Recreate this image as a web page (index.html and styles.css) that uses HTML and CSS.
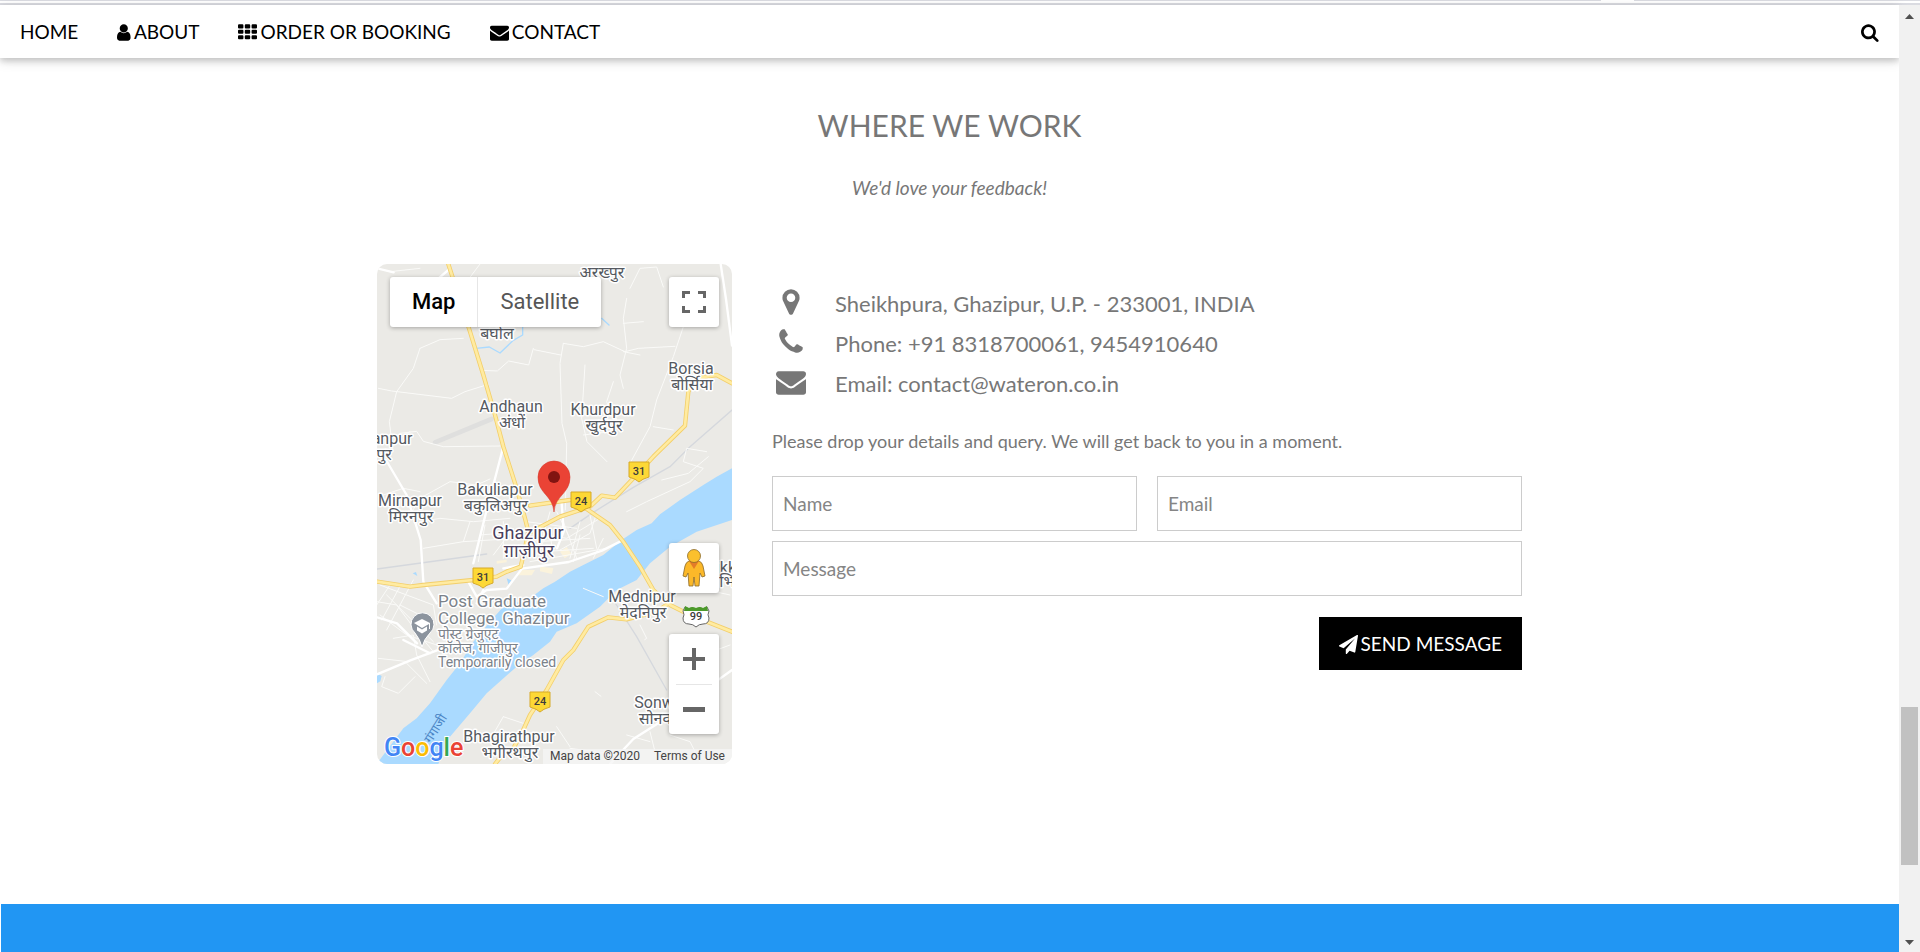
FILE: index.html
```html
<!DOCTYPE html>
<html lang="en">
<head>
<meta charset="utf-8">
<meta name="viewport" content="width=device-width, initial-scale=1">
<title>Where we work</title>
<link rel="stylesheet" href="styles.css">
</head>
<body>
<div class="strip"><span class="strip-left"></span><span class="strip-right"></span></div>
<div class="frame">
  <div class="page">
    <nav class="nav">
      <a class="nav-link" href="#home">HOME</a>
      <a class="nav-link" href="#about"><svg class="icon" viewBox="256 0 1280 1792" aria-hidden="true"><path d="M1536 1399q0 109-62.5 187t-150.5 78h-854q-88 0-150.5-78t-62.5-187q0-85 8.5-160.5t31.5-152 58.5-131 94-89 134.5-34.5q131 128 313 128t313-128q76 0 134.5 34.5t94 89 58.5 131 31.5 152 8.5 160.5zm-256-887q0 159-112.5 271.5t-271.5 112.5-271.5-112.5-112.5-271.5 112.5-271.5 271.5-112.5 271.5 112.5 112.5 271.5z"/></svg>ABOUT</a>
      <a class="nav-link" href="#order"><svg class="icon" viewBox="0 0 1792 1792" aria-hidden="true"><path d="M96 128h320q96 0 96 96v192q0 96-96 96H96q-96 0-96-96V224q0-96 96-96zM736 128h320q96 0 96 96v192q0 96-96 96H736q-96 0-96-96V224q0-96 96-96zM1376 128h320q96 0 96 96v192q0 96-96 96h-320q-96 0-96-96V224q0-96 96-96zM96 640h320q96 0 96 96v192q0 96-96 96H96q-96 0-96-96V736q0-96 96-96zM736 640h320q96 0 96 96v192q0 96-96 96H736q-96 0-96-96V736q0-96 96-96zM1376 640h320q96 0 96 96v192q0 96-96 96h-320q-96 0-96-96V736q0-96 96-96zM96 1152h320q96 0 96 96v192q0 96-96 96H96q-96 0-96-96v-192q0-96 96-96zM736 1152h320q96 0 96 96v192q0 96-96 96H736q-96 0-96-96v-192q0-96 96-96zM1376 1152h320q96 0 96 96v192q0 96-96 96h-320q-96 0-96-96v-192q0-96 96-96z"/></svg>ORDER OR BOOKING</a>
      <a class="nav-link" href="#contact"><svg class="icon" viewBox="0 0 1792 1792" aria-hidden="true"><path d="M1792 710v794q0 66-47 113t-113 47h-1472q-66 0-113-47t-47-113v-794q44 49 101 87 362 246 497 345 57 42 92.5 65.5t94.5 48 110 24.5h2q51 0 110-24.5t94.5-48 92.5-65.5q170-123 498-345 57-39 100-87zm0-294q0 79-49 151t-122 123q-376 261-468 325-10 7-42.5 31t-54 38.5-52 32.5-57.5 27-50 9h-2q-23 0-50-9t-57.5-27-52-32.5-54-38.5-42.5-31q-91-64-262-182.5t-205-142.5q-62-42-117-115.5t-55-136.5q0-78 41.5-130t118.5-52h1472q65 0 112.5 47t47.5 113z"/></svg>CONTACT</a>
      <a class="nav-link nav-search" href="#search" aria-label="Search"><svg class="icon" viewBox="64 0 1728 1792" aria-hidden="true"><path d="M1216 832q0-185-131.5-316.5t-316.5-131.5-316.5 131.5-131.5 316.5 131.5 316.5 316.5 131.5 316.5-131.5 131.5-316.5zm512 832q0 52-38 90t-90 38q-54 0-90-38l-343-342q-179 124-399 124-143 0-273.5-55.5t-225-150-150-225-55.5-273.5 55.5-273.5 150-225 225-150 273.5-55.5 273.5 55.5 225 150 150 225 55.5 273.5q0 220-124 399l343 343q37 37 37 90z"/></svg></a>
    </nav>

    <main class="section">
      <h3 class="title">WHERE WE WORK</h3>
      <p class="subtitle">We'd love your feedback!</p>
      <div class="columns">
        <div class="map">
          <svg class="map-canvas" viewBox="0 0 355 500" preserveAspectRatio="xMidYMid slice" role="img" aria-label="Map of Ghazipur">
            <rect width="355" height="500" fill="#ebeae6"/>
            <g transform="scale(.33333) translate(-21 -27)" fill="none" stroke-linejoin="round" stroke-linecap="round">
              <path fill="#aadaff" d="M1086 640L1040 665 1000 690 930 735 870 778 845 805 800 825 755 855 700 900 640 930 600 950 555 980 520 1000 480 1030 400 1055 360 1100 310 1160 270 1225 230 1275 180 1345 140 1390 100 1420 20 1527H205L240 1445 300 1375 350 1315 440 1235 490 1200 540 1160 560 1130 620 1105 690 1055 740 1005 800 975 840 925 900 875 980 830 1086 795Z"/>
              <path fill="#aadaff" d="M21 1255l14 8-4 16-10 6zM410 970l14 6-8 14zM128 955l10-4 4 12z"/>
              <g fill="#fbf3dc"><path d="M455 945h40l-10 16h-40zM510 935l40 4-4 18-36-8zM570 890l20-14 14 20-20 14zM380 918l30-4v8l-30 4z"/></g>
              <path stroke="#dfdfde" stroke-width="14" d="M195 562L365 492"/>
              <path stroke="#d5d8dd" stroke-width="4" d="M1086 465L960 575 900 635 790 697 670 772 600 820M21 942L350 897M730 1035L800 1145 890 1305"/>
              <path stroke="#aadaff" stroke-width="4" d="M318 280l40-4 32 18 40-38 28-16v-26M695 190l22 20"/>
              <g stroke="#fafaf8" stroke-width="3">
                <path d="M60 50l90-10M330 27l-30 40M580 265l-10 60 6 180 14 60-4 200M490 280l-14 50-60-12-34 30-50-2M492 284l80 16M580 265l60 10 60-15 65 30 40-10 110-6M150 280l-20 60-50 70-22 90 10 80-20 40M150 280l60-26 70-4M25 400l40 8 180 22 40-20 70-22M770 130l-10 60 10 90-20 80 10 40M940 215l-30 90-50 130-20 80-60 110M760 290l50 10M645 330l-10 160 16 70 60 60M730 380l-20 60 30 80M640 540l80-10 20-40M850 515l60 10M1010 590l-60-10-10 40 60 20-40 40-130 60-60 30M1015 605l-60 50-80 20M90 535l50-6 20 30 60 16 170-2M120 780l30-50 90-50 80 10 40-18M70 560l50-30M780 100l30-60 50-4 20 60M820 200l-60 5M150 800l60-10 100 10 110-10M40 720l60-20 50 10M20 1040l60 10 60 80 50 60M30 990l160 60 10 60M60 990l-40 60M95 985l-60 110M130 975l-80 150M30 1080l80 60 90 30M90 1050l100 50M50 1020l140 140M70 1150l60-10 10 60 40 80M45 1265l-10 30 50 20 50-50M25 1210l90 10M110 1225l60 60M300 800l-20 60-120 20M330 840l120-10M280 860l160-10M345 810l-20 110M400 800v110M430 820l-60 80M680 775l-20 60-90 50M500 900l30-60 60 10 100-60M540 830l10 80M580 800l40 110M630 800l-30 110M660 780l20 100M500 860l160-10M520 890l150-10M480 920l230-40M540 770l-20 70M560 770l40 80M470 800l150 20M610 920l20-80M700 850l-30 60M810 1110l20 40-6 4M675 1310l18 14M400 1385l60 20 20-12M400 1385l-40 70M560 1415l40 60M900 1440l60 20 30 60M840 1430l20 80M1000 1200l80-30M990 1000l90 20M640 1000l60 25M770 1440l70 20M600 1480l150 20"/>
              </g>
              <g stroke="#fff" stroke-width="7">
                <path d="M21 40l50 12M235 45l-30 26M1052 27l16 105 18 140M400 575L370 690 345 785 310 925M48 615l62 105 42 135 8 125 40 65M21 1258l100-42 80-30M295 980l25 45 30-20 60-4 46-60 140-20 100-34 60-30M100 1155l80 40M21 1087l60 18 60 60M720 1527l70-75 110-70M1030 1285l56-40M575 745l6 85-20 50M340 1005l-20 40M460 930l-60 10"/>
              </g>
              <g id="roads">
                <path class="road-edge" d="M235 27L300 230 340 360 375 480 400 575 440 700 465 790 475 830 465 880 452 935 410 950 380 965 310 975 160 990 120 995 21 980M480 752L600 735M485 830L570 785 660 755 695 722 735 728 790 670 850 605 945 512 955 410 975 370 1040 360 1086 385M640 755L720 810 760 860 810 935 850 1005 900 1050 960 1080 1086 1130M900 1042L860 1070 770 1093 715 1087 655 1115 610 1185 580 1215 530 1305 480 1380 455 1435 430 1480 400 1495 375 1527"/>
                <path class="road-fill" d="M235 27L300 230 340 360 375 480 400 575 440 700 465 790 475 830 465 880 452 935 410 950 380 965 310 975 160 990 120 995 21 980M480 752L600 735M485 830L570 785 660 755 695 722 735 728 790 670 850 605 945 512 955 410 975 370 1040 360 1086 385M640 755L720 810 760 860 810 935 850 1005 900 1050 960 1080 1086 1130M900 1042L860 1070 770 1093 715 1087 655 1115 610 1185 580 1215 530 1305 480 1380 455 1435 430 1480 400 1495 375 1527"/>
              </g>
            </g>
            <g class="shield">
              <path d="M252 198h20v15q-7 2-10 5q-3-3-10-5z"/><path d="M194 228h20v15q-7 2-10 5q-3-3-10-5z"/><path d="M96 304h20v15q-7 2-10 5q-3-3-10-5z"/><path d="M153 428h20v15q-7 2-10 5q-3-3-10-5z"/>
            </g>
            <path d="M308 343l4 2q3-2 7 0q4-2 7 0l4-2 2 4q-2 4 0 7q0 6-6 6-4 0-7 3-3-3-7-3-6 0-6-6 2-3 0-7z" fill="#fff" stroke="#666" stroke-width="1"/>
            <path d="M308 342l4 2q3-2 7 0q4-2 7 0l4-2 1 5h-24z" fill="#4c9a2a"/>
            <g class="shield-text">
              <text x="262" y="211">31</text><text x="204" y="241">24</text><text x="106" y="317">31</text><text x="163" y="441">24</text><text x="319" y="356">99</text>
            </g>
            <g class="label">
              <text x="225" y="14">अरख्पुर</text><text x="120" y="75">बघोल</text>
              <text x="314" y="110">Borsia</text><text x="315" y="126">बोर्सिया</text>
              <text x="134" y="148">Andhaun</text><text x="135" y="164">अंधों</text>
              <text x="226" y="151">Khurdpur</text><text x="227" y="167">खुर्दपुर</text>
              <text x="15" y="180">anpur</text><text x="7" y="196">पुर</text>
              <text x="118" y="231">Bakuliapur</text><text x="119" y="247">बकुलिअपुर</text>
              <text x="33" y="242">Mirnapur</text><text x="34" y="258">मिरनपुर</text>
              <text x="265" y="338">Mednipur</text><text x="266" y="354">मेदनिपुर</text>
              <text x="349" y="309">ikk</text><text x="350" y="323">भि</text>
              <text x="277" y="444">Sonw</text><text x="278" y="460">सोनव</text>
              <text x="132" y="478">Bhagirathpur</text><text x="133" y="494">भगीरथपुर</text>
            </g>
            <g class="label label-city"><text x="151" y="275">Ghazipur</text><text x="152" y="293">ग़ाज़ीपुर</text></g>
            <g class="label label-poi">
              <text x="61" y="343">Post Graduate</text><text x="61" y="360">College, Ghazipur</text>
              <text class="poi-small" x="61" y="375">पोस्ट ग्रेजुएट</text><text class="poi-small" x="61" y="389">कॉलेज, गाजीपुर</text><text class="poi-small" x="61" y="403">Temporarily closed</text>
            </g>
            <path d="M45 383q-2-8-7-14a11.500 11.500 0 1 1 15-0q-6 6-8 14z" fill="#8c949e" stroke="#fff" stroke-width="1"/>
            <path d="M37 359l8-4 8 4v6h-1v-5l-7 4zM40 362.500l5 3 5-3v4l-5 3-5-3z" fill="#fff"/>
            <text class="river-name" x="54" y="480" transform="rotate(-58 54 480)">गंगाजी</text>
            <path d="M177 248c-1-17-16-18-16-35a16 16 0 0 1 32 0c0 17-15 18-16 35z" fill="#ea4335" stroke="#d63a2e" stroke-width=".6"/>
            <circle cx="177" cy="213" r="6" fill="#811411"/>
            <g class="brand"><text x="7" y="492"><tspan fill="#4285f4">G</tspan><tspan fill="#ea4335">o</tspan><tspan fill="#fbbc05">o</tspan><tspan fill="#4285f4">g</tspan><tspan fill="#34a853">l</tspan><tspan fill="#ea4335">e</tspan></text></g>
          </svg>
          <div class="map-types"><button class="map-type active" type="button">Map</button><button class="map-type" type="button">Satellite</button></div>
          <button class="map-btn fullscreen" type="button" aria-label="Toggle fullscreen"><svg width="24" height="24" viewBox="0 0 24 24" fill="none" stroke="#666" stroke-width="3"><path d="M1.500 8V2.500H8M16 2.500h6.500V8M22.500 16v5.500H16M8 21.500H1.500V16"/></svg></button>
          <button class="map-btn pegman" type="button" aria-label="Street View"><svg width="24" height="38" viewBox="0 0 24 38"><path d="M7 12q-3 1-4 5L1 27l3 1 2-4 1 13h4l1-9 1 9h4l1-13 2 4 3-1-2-10q-1-4-4-5z" fill="#fbb829" stroke="#8a6a2a" stroke-width=".8"/><path d="M7 12h10l-5 8z" fill="#e37b28"/><circle cx="12" cy="7" r="6.500" fill="#fbc02d" stroke="#8a6a2a" stroke-width=".8"/></svg></button>
          <div class="zoom">
            <button class="zoom-btn" type="button" aria-label="Zoom in"><svg width="24" height="24" viewBox="0 0 24 24"><path d="M10 1h4v9h9v4h-9v9h-4v-9H1v-4h9z" fill="#666"/></svg></button>
            <button class="zoom-btn" type="button" aria-label="Zoom out"><svg width="24" height="24" viewBox="0 0 24 24"><path d="M1 9h22v5H1z" fill="#666"/></svg></button>
          </div>
          <div class="map-legal"><span>Map data ©2020</span><a href="#terms">Terms of Use</a></div>
        </div>

        <div class="contact">
          <ul class="contact-list">
            <li><svg class="contact-icon" viewBox="0 0 1792 1792" aria-hidden="true"><path d="M1152 640q0-106-75-181t-181-75-181 75-75 181 75 181 181 75 181-75 75-181zm256 0q0 109-33 179l-364 774q-16 33-47.500 52t-67.500 19-67.500-19-46.500-52l-365-774q-33-70-33-179 0-212 150-362t362-150 362 150 150 362z"/></svg><span>Sheikhpura, Ghazipur, U.P. - 233001, INDIA</span></li>
            <li><svg class="contact-icon" viewBox="0 0 1792 1792" aria-hidden="true"><path d="M1600 1240q0 27-10 70.500t-21 68.500q-21 50-122 106-94 51-186 51-27 0-53-3.500t-57.500-12.500-47-14.500-55.500-20.500-49-18q-98-35-175-83-127-79-264-216t-216-264q-48-77-83-175-3-9-18-49t-20.500-55.500-14.500-47-12.500-57.500-3.500-53q0-92 51-186 56-101 106-122 25-11 68.500-21t70.500-10q14 0 21 3 18 6 53 76 11 19 30 54t35 63.500 31 53.500q3 4 17.500 25t21.500 35.500 7 28.500q0 20-28.500 50t-62 55-62 53-28.500 46q0 9 5 22.500t8.500 20.500 14 24 11.500 19q76 137 174 235t235 174q2 1 19 11.500t24 14 20.500 8.500 22.500 5q18 0 46-28.500t53-62 55-62 50-28.500q14 0 28.500 7t35.500 21.500 25 17.500q25 15 53.500 31t63.500 35 54 30q70 35 76 53 3 7 3 21z"/></svg><span>Phone: +91 8318700061, 9454910640</span></li>
            <li><svg class="contact-icon" viewBox="0 0 1792 1792" aria-hidden="true"><path d="M1792 710v794q0 66-47 113t-113 47h-1472q-66 0-113-47t-47-113v-794q44 49 101 87 362 246 497 345 57 42 92.500 65.500t94.500 48 110 24.500h2q51 0 110-24.500t94.500-48 92.500-65.500q170-123 498-345 57-39 100-87zm0-294q0 79-49 151t-122 123q-376 261-468 325-10 7-42.500 31t-54 38.500-52 32.500-57.500 27-50 9h-2q-23 0-50-9t-57.500-27-52-32.500-54-38.500-42.500-31q-91-64-262-182.500t-205-142.500q-62-42-117-115.500t-55-136.500q0-78 41.500-130t118.500-52h1472q65 0 112.500 47t47.500 113z"/></svg><span>Email: contact@wateron.co.in</span></li>
          </ul>
          <p class="prompt">Please drop your details and query. We will get back to you in a moment.</p>
          <form class="form">
            <div class="form-row">
              <input class="field" type="text" placeholder="Name" aria-label="Name">
              <input class="field" type="text" placeholder="Email" aria-label="Email">
            </div>
            <input class="field" type="text" placeholder="Message" aria-label="Message">
            <button class="send" type="button"><svg class="icon" viewBox="0 0 1792 1792" aria-hidden="true"><path d="M1764 11q33 24 27 64l-256 1536q-5 29-32 45-14 8-31 8-11 0-24-5l-453-185-242 295q-18 23-49 23-13 0-22-4-19-7-30.500-23.500t-11.500-36.500v-349l864-1059-1069 925-395-162q-37-14-40-55-2-40 32-59l1664-960q15-9 32-9 20 0 36 11z"/></svg>SEND MESSAGE</button>
          </form>
        </div>
      </div>
    </main>
    <footer class="footer"></footer>
  </div>
  <div class="scrollbar" aria-hidden="true">
    <svg width="9" height="5" viewBox="0 0 9 5"><path d="M0 5L4.500 0 9 5z" fill="#505050"/></svg>
    <div class="track"><div class="thumb"></div></div>
    <svg width="9" height="5" viewBox="0 0 9 5"><path d="M0 0L4.500 5 9 0z" fill="#505050"/></svg>
  </div>
</div>
</body>
</html>
```
FILE: styles.css
```css
* { box-sizing: border-box; }

body {
  margin: 0;
  min-height: 100vh;
  display: flex;
  flex-direction: column;
  background: #fff;
  color: #777;
  font-family: Lato, "Liberation Sans", sans-serif;
  font-size: 19px;
  line-height: 28px;
}

button, input { font: inherit; }
h3, p, ul { margin: 0; padding: 0; font-weight: 400; }

.strip {
  height: 5px;
  display: flex;
  justify-content: space-between;
  border-bottom: 2px solid #dadbe1;
}
.strip-left, .strip-right { height: 1px; background: #dadbe1; }
.strip-left { width: 83.4%; }
.strip-right { width: 14.9%; }

.frame { flex: 1; display: flex; }
.page {
  flex: 1;
  min-width: 0;
  display: flex;
  flex-direction: column;
}

.nav {
  display: flex;
  background: #fff;
  box-shadow: 0 3px 6px rgba(0, 0, 0, .16), 0 3px 12px rgba(0, 0, 0, .12);
}
.nav-link {
  display: flex;
  align-items: center;
  gap: 3px;
  padding: 13px 20px 12px;
  color: #000;
  text-decoration: none;
}
.nav-link + .nav-link { padding-left: 19px; }
.nav-link.nav-search { margin-left: auto; }
.icon { height: 19px; fill: currentColor; }

.section {
  flex: 1;
  padding: 45px 20px 140px;
}
.title {
  font-size: 30px;
  line-height: 44px;
  text-align: center;
}
.subtitle {
  margin: 27px 0 62px;
  font-style: italic;
  text-align: center;
}
.columns {
  max-width: 1145px;
  margin: 0 auto;
  display: grid;
  grid-template-columns: 355fr 750fr;
  gap: 40px;
}

.map {
  position: relative;
  height: 500px;
  border-radius: 10px;
  overflow: hidden;
  font-family: Roboto, "Noto Sans Devanagari", "Noto Sans", sans-serif;
}
.map-canvas { display: block; width: 100%; height: 100%; }
.road-edge { stroke: #f3cf6b; stroke-width: 13px; }
.road-fill { stroke: #ffeba1; stroke-width: 8px; }
.shield path { fill: #fdd835; stroke: #d6a928; stroke-width: 1px; }
.shield-text { font-size: 11px; font-weight: 500; fill: #3c3c3c; text-anchor: middle; }
.label {
  font-size: 16px;
  fill: #55595f;
  stroke: #fff;
  stroke-width: 3px;
  stroke-linejoin: round;
  paint-order: stroke;
  text-anchor: middle;
}
.label-city { font-size: 18px; fill: #4a3f5c; }
.label-poi { font-size: 17px; fill: #7b828a; text-anchor: start; }
.poi-small { font-size: 14px; }
.river-name { font-size: 13px; fill: #4c86c6; }
.brand { font-size: 25px; font-weight: 500; stroke: #fff; stroke-width: 2px; paint-order: stroke; }

.map-types, .map-btn, .zoom {
  position: absolute;
  background: #fff;
  border: 0;
  border-radius: 3px;
  box-shadow: 0 1px 4px rgba(0, 0, 0, .3);
}
.map-types { top: 13px; left: 13px; display: flex; }
.map-type {
  height: 50px;
  padding: 0 22px;
  border: 0;
  background: none;
  color: #565656;
  font-size: 22px;
}
.map-type + .map-type { border-left: 1px solid #e6e6e6; }
.map-type.active { color: #000; font-weight: 500; }
.map-btn {
  right: 13px;
  width: 50px;
  height: 50px;
  padding: 0;
  display: grid;
  place-items: center;
}
.fullscreen { top: 13px; }
.pegman { top: 279px; }
.zoom { right: 13px; bottom: 30px; width: 50px; padding: 0 7px; }
.zoom-btn {
  width: 100%;
  height: 50px;
  padding: 0;
  display: grid;
  place-items: center;
  border: 0;
  background: none;
}
.zoom-btn + .zoom-btn { border-top: 1px solid #e6e6e6; }
.map-legal {
  position: absolute;
  right: 0;
  bottom: 0;
  display: flex;
  background: rgba(245, 245, 245, .8);
  color: #444;
  font-size: 12px;
  line-height: 15px;
}
.map-legal > * { padding: 0 7px; color: inherit; text-decoration: none; }

.contact { padding-top: 18px; }
.contact-list { list-style: none; font-size: 22px; line-height: 37px; }
.contact-list li { display: flex; align-items: center; height: 40px; gap: 29px; padding-left: 4px; }
.contact-list span { padding-top: 2px; }
.contact-icon { width: 30px; height: 30px; fill: currentColor; }
.prompt { margin: 25px 0 21px; font-size: 18px; }

.form { display: grid; gap: 10px; }
.form-row { display: grid; grid-template-columns: 1fr 1fr; gap: 20px; }
.field {
  width: 100%;
  height: 55px;
  padding: 0 10px;
  border: 1px solid #ccc;
  border-radius: 0;
  background: #fff;
}
.field::placeholder { color: #858585; opacity: 1; }
.send {
  justify-self: end;
  display: flex;
  align-items: center;
  gap: 3px;
  margin-top: 11px;
  padding: 13px 20px 12px;
  border: 0;
  background: #000;
  color: #fff;
}

.footer { height: 48px; border-left: 1px solid #fff; background: #2196f3; }

.scrollbar {
  width: 21px;
  padding: 9px 0 7px;
  display: flex;
  flex-direction: column;
  align-items: center;
  background: #f1f1f1;
}
.track { flex: 1; width: 17px; }
.thumb { height: 158px; margin-top: 688px; background: #c1c1c1; }
```
